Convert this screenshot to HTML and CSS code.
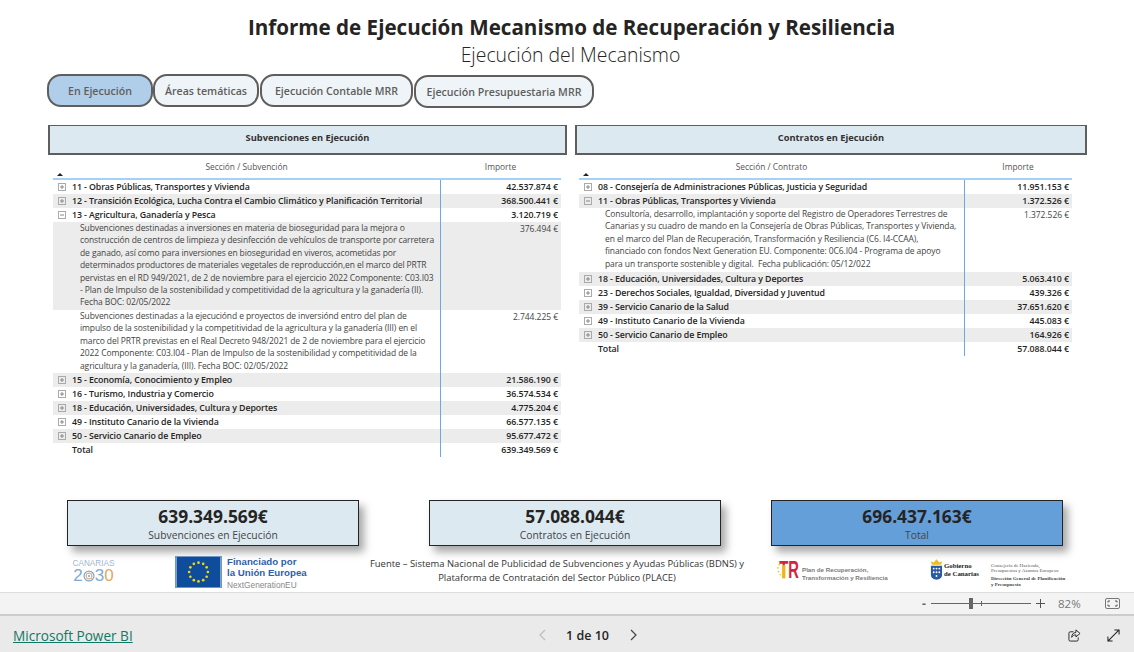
FILE: index.html
```html
<!DOCTYPE html>
<html lang="es">
<head>
<meta charset="utf-8">
<title>Informe de Ejecución Mecanismo de Recuperación y Resiliencia</title>
<link rel="stylesheet" href="styles.css">
</head>
<body>
<svg class="defs" aria-hidden="true">
  <symbol id="plus" viewBox="0 0 8 8"><rect x=".5" y=".5" width="7" height="7" fill="none" stroke="#aaa"/><path d="M2 4h4M4 2v4" stroke="#888"/></symbol>
  <symbol id="minus" viewBox="0 0 8 8"><rect x=".5" y=".5" width="7" height="7" fill="none" stroke="#aaa"/><path d="M2 4h4" stroke="#888"/></symbol>
</svg>
<main class="report">
  <header class="head">
    <h1 class="title">Informe de Ejecución Mecanismo de Recuperación y Resiliencia</h1>
    <p class="subtitle">Ejecución del Mecanismo</p>
  </header>
  <nav class="tabs">
    <a class="tab tab-active tab-a">En Ejecución</a>
    <a class="tab tab-b">Áreas temáticas</a>
    <a class="tab tab-c">Ejecución Contable MRR</a>
    <a class="tab tab-d">Ejecución Presupuestaria MRR</a>
  </nav>
  <section class="panels">
    <div class="panel panel-left">
      <div class="panel-title">Subvenciones en Ejecución</div>
      <div class="table table-left">
        <div class="thead"><span class="th">Sección / Subvención</span><span class="th th-val">Importe</span><i class="sort"></i></div>
        <div class="row"><div class="cell"><svg class="exp"><use href="#plus"/></svg>11 - Obras Públicas, Transportes y Vivienda</div><div class="val">42.537.874 €</div></div>
        <div class="row alt"><div class="cell"><svg class="exp"><use href="#plus"/></svg>12 - Transición Ecológica, Lucha Contra el Cambio Climático y Planificación Territorial</div><div class="val">368.500.441 €</div></div>
        <div class="row"><div class="cell"><svg class="exp"><use href="#minus"/></svg>13 - Agricultura, Ganadería y Pesca</div><div class="val">3.120.719 €</div></div>
        <div class="row detail alt"><div class="cell">Subvenciones destinadas a inversiones en materia de bioseguridad para la mejora o<br>construcción de centros de limpieza y desinfección de vehículos de transporte por carretera<br>de ganado, así como para inversiones en bioseguridad en viveros, acometidas por<br>determinados productores de materiales vegetales de reproducción,en el marco del PRTR<br>pervistas en el RD 949/2021, de 2 de noviembre para el ejercicio 2022 Componente: C03.I03<br>- Plan de Impulso de la sostenibilidad y competitividad de la agricultura y la ganadería (II).<br>Fecha BOC: 02/05/2022</div><div class="val">376.494 €</div></div>
        <div class="row detail"><div class="cell">Subvenciones destinadas a la ejecuciónd e proyectos de inversiónd entro del plan de<br>impulso de la sostenibilidad y la competitividad de la agricultura y la ganadería (III) en el<br>marco del PRTR previstas en el Real Decreto 948/2021 de 2 de noviembre para el ejercicio<br>2022 Componente: C03.I04 - Plan de Impulso de la sostenibilidad y competitividad de la<br>agricultura y la ganadería, (III). Fecha BOC: 02/05/2022</div><div class="val">2.744.225 €</div></div>
        <div class="row alt"><div class="cell"><svg class="exp"><use href="#plus"/></svg>15 - Economía, Conocimiento y Empleo</div><div class="val">21.586.190 €</div></div>
        <div class="row"><div class="cell"><svg class="exp"><use href="#plus"/></svg>16 - Turismo, Industria y Comercio</div><div class="val">36.574.534 €</div></div>
        <div class="row alt"><div class="cell"><svg class="exp"><use href="#plus"/></svg>18 - Educación, Universidades, Cultura y Deportes</div><div class="val">4.775.204 €</div></div>
        <div class="row"><div class="cell"><svg class="exp"><use href="#plus"/></svg>49 - Instituto Canario de la Vivienda</div><div class="val">66.577.135 €</div></div>
        <div class="row alt"><div class="cell"><svg class="exp"><use href="#plus"/></svg>50 - Servicio Canario de Empleo</div><div class="val">95.677.472 €</div></div>
        <div class="row total"><div class="cell">Total</div><div class="val">639.349.569 €</div></div>
      </div>
    </div>
    <div class="panel panel-right">
      <div class="panel-title">Contratos en Ejecución</div>
      <div class="table table-right">
        <div class="thead"><span class="th">Sección / Contrato</span><span class="th th-val">Importe</span><i class="sort"></i></div>
        <div class="row"><div class="cell"><svg class="exp"><use href="#plus"/></svg>08 - Consejería de Administraciones Públicas, Justicia y Seguridad</div><div class="val">11.951.153 €</div></div>
        <div class="row alt"><div class="cell"><svg class="exp"><use href="#minus"/></svg>11 - Obras Públicas, Transportes y Vivienda</div><div class="val">1.372.526 €</div></div>
        <div class="row detail"><div class="cell">Consultoría, desarrollo, implantación y soporte del Registro de Operadores Terrestres de<br>Canarias y su cuadro de mando en la Consejería de Obras Públicas, Transportes y Vivienda,<br>en el marco del Plan de Recuperación, Transformación y Resiliencia (C6. I4-CCAA),<br>financiado con fondos Next Generation EU. Componente: 0C6.I04 - Programa de apoyo<br>para un transporte sostenible y digital.&nbsp; Fecha publicación: 05/12/022</div><div class="val">1.372.526 €</div></div>
        <div class="row alt"><div class="cell"><svg class="exp"><use href="#plus"/></svg>18 - Educación, Universidades, Cultura y Deportes</div><div class="val">5.063.410 €</div></div>
        <div class="row"><div class="cell"><svg class="exp"><use href="#plus"/></svg>23 - Derechos Sociales, Igualdad, Diversidad y Juventud</div><div class="val">439.326 €</div></div>
        <div class="row alt"><div class="cell"><svg class="exp"><use href="#plus"/></svg>39 - Servicio Canario de la Salud</div><div class="val">37.651.620 €</div></div>
        <div class="row"><div class="cell"><svg class="exp"><use href="#plus"/></svg>49 - Instituto Canario de la Vivienda</div><div class="val">445.083 €</div></div>
        <div class="row alt"><div class="cell"><svg class="exp"><use href="#plus"/></svg>50 - Servicio Canario de Empleo</div><div class="val">164.926 €</div></div>
        <div class="row total"><div class="cell">Total</div><div class="val">57.088.044 €</div></div>
      </div>
    </div>
  </section>
  <section class="kpis">
    <div class="kpi"><strong class="kpi-num">639.349.569€</strong><span class="kpi-label">Subvenciones en Ejecución</span></div>
    <div class="kpi"><strong class="kpi-num">57.088.044€</strong><span class="kpi-label">Contratos en Ejecución</span></div>
    <div class="kpi kpi-total"><strong class="kpi-num">696.437.163€</strong><span class="kpi-label">Total</span></div>
  </section>
  <section class="logos">
    <div class="can">
      <span class="can-top">CANARIAS</span>
      <span class="can-num"><b class="c-blue">2</b><svg class="can-o" viewBox="0 0 14 14"><circle cx="7" cy="7" r="5.8" fill="none" stroke="#7fa9d4" stroke-width="1.4"/><circle cx="7" cy="7" r="3.4" fill="none" stroke="#e3b27a" stroke-width="1.4"/><circle cx="7" cy="7" r="1.3" fill="#7fa9d4"/></svg><b class="c-blue">3</b><b class="c-orange">0</b></span>
    </div>
    <div class="eu">
      <svg class="flag" viewBox="0 0 47 32"><rect width="47" height="32" fill="#0f4c9c"/><g fill="#f5d90a"><circle cx="23.5" cy="6" r="1.4"/><circle cx="28.5" cy="7.3" r="1.4"/><circle cx="32.2" cy="11" r="1.4"/><circle cx="33.5" cy="16" r="1.4"/><circle cx="32.2" cy="21" r="1.4"/><circle cx="28.5" cy="24.7" r="1.4"/><circle cx="23.5" cy="26" r="1.4"/><circle cx="18.5" cy="24.7" r="1.4"/><circle cx="14.8" cy="21" r="1.4"/><circle cx="13.5" cy="16" r="1.4"/><circle cx="14.8" cy="11" r="1.4"/><circle cx="18.5" cy="7.3" r="1.4"/></g></svg>
      <div class="eu-text"><b>Financiado por</b><b>la Unión Europea</b><span>NextGenerationEU</span></div>
    </div>
    <p class="source">Fuente – Sistema Nacional de Publicidad de Subvenciones y Ayudas Públicas (BDNS) y<br>Plataforma de Contratación del Sector Público (PLACE)</p>
    <div class="prtr">
      <svg class="prtr-mark" viewBox="0 0 24 32"><g fill="#f2c200"><circle cx="1" cy="13" r=".9"/><circle cx="1.500" cy="17" r=".9"/><circle cx="2.500" cy="9.500" r=".9"/><circle cx="3.500" cy="20.500" r=".9"/></g><g transform="translate(2.500 24.500) scale(.62 1)"><text class="tr-t">T</text></g><rect x="6" y="10" width="3" height="14.500" fill="#f2b800"/><g transform="translate(12.400 24.500) scale(.62 1)"><text class="tr-r">R</text></g></svg>
      <div class="prtr-text">Plan de Recuperación,<br>Transformación y Resiliencia</div>
    </div>
    <div class="gob">
      <svg class="crest" viewBox="0 0 14 24"><path d="M2 7 1 3l3 1.500L7 1l3 3.500L13 3l-1 4z" fill="#eebb22"/><path d="M1 8h12v10c0 3-3 5-6 5s-6-2-6-5z" fill="#2b5aa5"/><g fill="#fff"><circle cx="4" cy="11" r="1"/><circle cx="7" cy="11" r="1"/><circle cx="10" cy="11" r="1"/><circle cx="4" cy="15" r="1"/><circle cx="7" cy="15" r="1"/><circle cx="10" cy="15" r="1"/><circle cx="7" cy="19" r="1"/></g></svg>
      <div class="gob-text">Gobierno<br>de Canarias</div>
    </div>
    <div class="cons"><div class="cons-a">Consejería de Hacienda,<br>Presupuestos y Asuntos Europeos</div><div class="cons-b">Dirección General de Planificación<br>y Presupuesto</div></div>
  </section>
</main>
<div class="zoombar">
  <span class="z-minus">-</span>
  <div class="slider"><i class="thumb"></i><i class="tick"></i></div>
  <svg class="z-plus" viewBox="0 0 9 9"><path d="M0 4.500h9M4.500 0v9" stroke="#555" stroke-width="1"/></svg>
  <span class="z-pct">82%</span>
  <svg class="z-fit" viewBox="0 0 15 11"><rect x=".5" y=".5" width="14" height="10" rx="1.500" fill="none" stroke="#777"/><path d="M3 4.500V3h2M10 3h2v1.500M3 6.500V8h2M10 8h2V6.500" fill="none" stroke="#555"/></svg>
</div>
<footer class="foot">
  <a class="pbi">Microsoft Power BI</a>
  <div class="pager">
    <svg class="chev" viewBox="0 0 7 12"><path d="M6 1 1 6l5 5" fill="none" stroke="#bdbdbd" stroke-width="1.200"/></svg>
    <span class="pg">1 de 10</span>
    <svg class="chev" viewBox="0 0 7 12"><path d="m1 1 5 5-5 5" fill="none" stroke="#444" stroke-width="1.200"/></svg>
  </div>
  <svg class="share" viewBox="0 0 14 14"><path d="M6 3H2.500A1.500 1.500 0 0 0 1 4.500v7A1.500 1.500 0 0 0 2.500 13h7a1.500 1.500 0 0 0 1.500-1.500V9" fill="none" stroke="#222"/><path d="M8.500 1 13 4.800 8.500 8.500V6.300C6.500 6.300 5 7 4 9c0-3 1.500-5 4.500-5.300z" fill="none" stroke="#222"/></svg>
  <svg class="expand" viewBox="0 0 14 14"><path d="M1 13 13 1M8 1h5v5M1 8v5h5" fill="none" stroke="#222" stroke-width="1.100"/></svg>
</footer>
</body>
</html>
```
FILE: styles.css
```css
* { box-sizing: border-box; }
html, body { margin: 0; padding: 0; }
body {
  width: 1134px;
  height: 652px;
  overflow: hidden;
  background: #fff;
  color: #252423;
  font-family: "Open Sans", "Noto Sans", "DejaVu Sans", sans-serif;
}
.defs { display: none; }

.report { height: 592px; display: flex; flex-direction: column; }

.head { height: 74px; padding: 14px 0 0 9px; text-align: center; }
.title { margin: 0; font-size: 20.600px; line-height: 27px; font-weight: 700; color: #252423; }
.subtitle { margin: 0 2px 0 0; font-size: 19.400px; line-height: 27px; font-weight: 300; color: #252423; }

.tabs { display: flex; height: 33px; padding-left: 47px; align-items: flex-start; }
.tab {
  display: flex; align-items: center; justify-content: center;
  height: 33px; border: 2.500px solid #605e5c; border-radius: 14px;
  background: #eef4f8; color: #605e5c; font-size: 10.600px; font-weight: 600; white-space: nowrap;
}
.tab-active { background: #b0cdea; }
.tab-a { width: 106px; }
.tab-b { width: 106px; }
.tab-c { width: 153px; margin-left: 1px; }
.tab-d { width: 180px; margin-left: 1px; margin-top: 1px; }

.panels { display: flex; height: 393px; padding: 18px 0 0 48px; gap: 8px; align-items: flex-start; }
.panel-left { width: 519px; }
.panel-right { width: 512px; }
.panel-title {
  height: 30px; padding-bottom: 4px; background: #dce9f1; border: 2px solid #605e5c; border-top-width: 1.500px;
  display: flex; align-items: center; justify-content: center;
  font-size: 9.300px; font-weight: 700; color: #333;
}

.table { position: relative; margin-left: 5px; font-size: 8.800px; }
.table-left { width: 508px; --val: 121px; }
.table-right { width: 493px; margin-left: 4px; --val: 108px; }

.thead {
  position: relative; display: grid; grid-template-columns: 1fr var(--val);
  height: 25px; padding-top: 5px; line-height: 14px;
  border-bottom: 2px solid #a6d0f5;
  color: #555; font-size: 8.400px;
}
.th { text-align: center; }
.sort {
  position: absolute; left: 4px; bottom: 2px; width: 0; height: 0;
  border: 3px solid transparent; border-top: 0; border-bottom: 3px solid #222;
}

.row { display: grid; grid-template-columns: 1fr var(--val); min-height: 14px; line-height: 14px; }
.alt { background: #ececec; }
.cell {
  display: flex; align-items: center;
  padding-left: 4px; font-weight: 600; color: #252423; white-space: nowrap; letter-spacing: -.1px;
}
.val {
  border-left: 1px solid #6aa9e4; padding-right: 3px; text-align: right;
  font-weight: 600; color: #252423; letter-spacing: -.05px;
}
.exp { width: 8px; height: 8px; margin: 0 6px 0 1px; flex: none; }
.total .cell { padding-left: 19px; }

.detail { font-size: 8.500px; }
.detail .cell { display: block; padding: 0 0 1.100px 27px; font-weight: 400; color: #444; line-height: 12.400px; }
.detail .val { font-weight: 400; color: #444; line-height: 12.400px; padding-top: 1px; }
.table-right .detail .cell { padding: 0 0 2px 26px; }

.kpis { display: flex; height: 55px; padding-left: 67px; }
.kpi {
  width: 292px; height: 46px; margin-right: 70px; padding-top: 4px;
  display: flex; flex-direction: column; align-items: center;
  background: #dce9f1; border: 1.500px solid #252423;
  box-shadow: 5px 6px 8px rgba(0,0,0,.35);
}
.kpi + .kpi + .kpi { margin-left: -20px; }
.kpi-total { background: #659fd9; }
.kpi-num { font-size: 17.400px; line-height: 23px; font-weight: 700; color: #252423; }
.kpi-label { font-size: 10.350px; line-height: 14px; color: #444; }

.logos { display: flex; align-items: flex-start; height: 37px; }
.can { width: 41px; margin: 5px 0 0 73px; display: flex; flex-direction: column; align-items: center; font-family: "Liberation Sans", sans-serif; }
.can-top { font-size: 8.200px; line-height: 8px; color: #a0b6cf; }
.can-num { display: flex; align-items: center; font-size: 17px; line-height: 15px; }
.can-num b { font-weight: 400; }
.c-blue { color: #7fa9d4; }
.c-orange { color: #e3a860; }
.can-o { width: 12px; height: 12px; }

.eu { display: flex; width: 133px; margin: 1px 0 0 61px; gap: 5px; font-family: "Liberation Sans", sans-serif; }
.flag { width: 47px; height: 32px; border: 1px solid #6f96c9; }
.eu-text { display: flex; flex-direction: column; line-height: 11px; font-size: 9px; color: #2f5fa8; white-space: nowrap; }
.eu-text b { font-size: 9.700px; }
.eu-text span { margin-top: 2px; font-size: 8.300px; color: #888; }

.source { width: 390px; margin: 2px 0 0 54px; text-align: center; font-size: 9.430px; line-height: 14px; color: #333; white-space: nowrap; }

.prtr { display: flex; width: 114px; height: 32px; align-items: flex-start; margin: 1px 0 0 25px; gap: 3px; }
.prtr-mark { width: 22px; height: 29.300px; flex: none; }
.tr-t, .tr-r { font: 700 26px "Liberation Sans", sans-serif; fill: #d6243c; }
.prtr-text { margin-top: 10px; font: 700 6.200px/7.500px "Liberation Sans", sans-serif; color: #7a7a7a; white-space: nowrap; }

.gob { display: flex; width: 49px; margin: 3px 0 0 39px; gap: 1px; align-items: center; }
.crest { width: 13px; height: 23px; flex: none; }
.gob-text { font: 700 6.800px/7.500px "Liberation Serif", serif; color: #222; white-space: nowrap; }

.cons { margin: 8px 0 0 12px; font: 5px/5.200px "Liberation Serif", serif; color: #555; white-space: nowrap; }
.cons-b { margin-top: 3px; font-weight: 700; color: #444; }

.zoombar {
  display: flex; align-items: center; height: 24px;
  background: #f3f3f3; border-top: 1px solid #ddd; border-bottom: 2px solid #ccc;
  padding-left: 922px; color: #666; font-size: 12px;
}
.z-minus { width: 9px; font-weight: 700; color: #666; }
.slider { position: relative; width: 100px; height: 1px; background: #666; }
.thumb { position: absolute; left: 38px; top: -5px; width: 4px; height: 11px; background: #666; }
.tick { position: absolute; left: 50px; top: -2px; width: 1px; height: 5px; background: #666; }
.z-plus { width: 9px; height: 9px; margin-left: 5px; }
.z-pct { margin-left: 13px; width: 25px; font-size: 11.500px; color: #777; }
.z-fit { width: 15px; height: 11px; margin-left: 22px; }

.foot { display: flex; align-items: center; height: 36px; padding: 2px 0 0 13px; background: #eaeaea; }
.pbi { width: 120px; font-size: 13.600px; color: #117865; text-decoration: underline; white-space: nowrap; }
.pager { display: flex; align-items: center; margin-left: 406px; }
.chev { width: 7px; height: 12px; }
.pg { margin: 0 20px; width: 44px; font-size: 12.500px; font-weight: 600; color: #252423; white-space: nowrap; }
.share { width: 13px; height: 13px; margin-left: 431px; }
.expand { width: 13px; height: 13px; margin-left: 26px; }
```
